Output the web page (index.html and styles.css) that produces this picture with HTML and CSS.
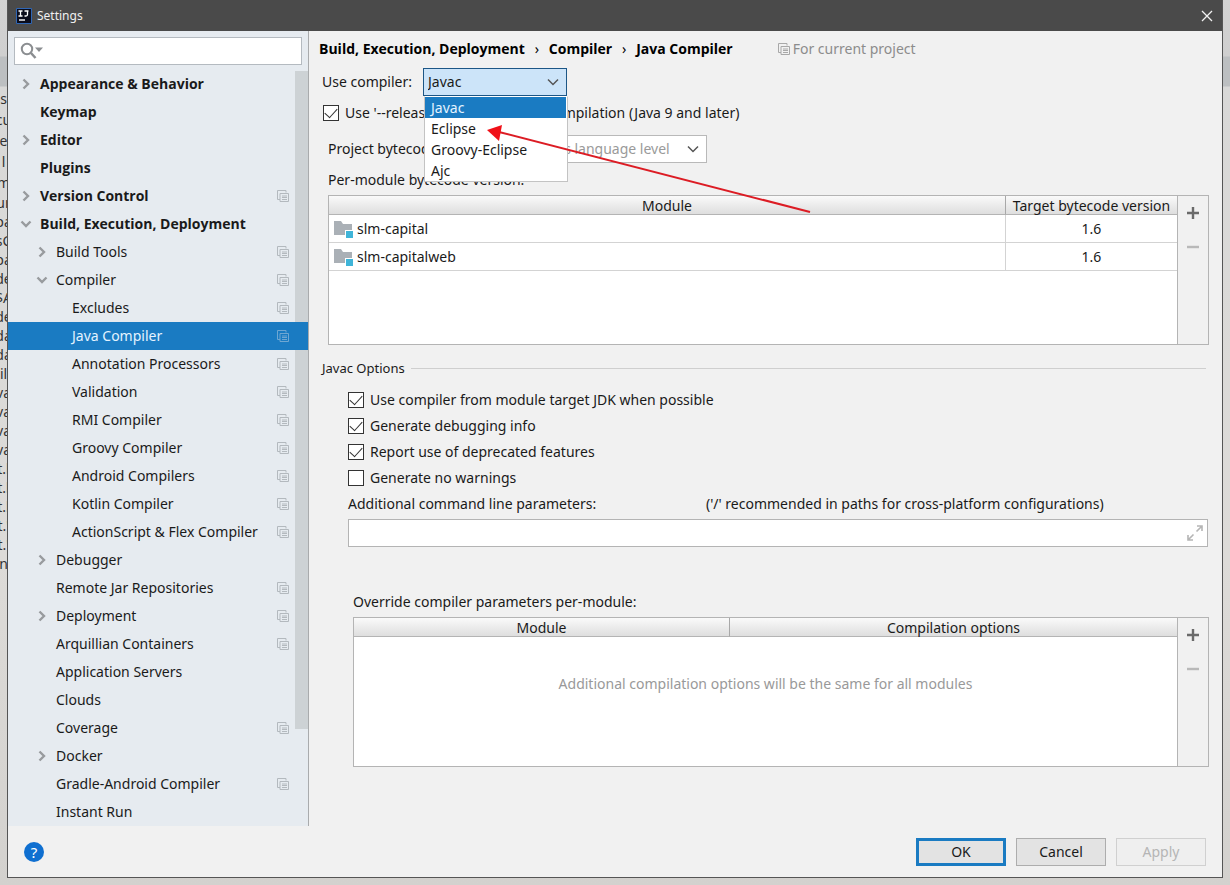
FILE: index.html
```html
<!DOCTYPE html>
<html lang="en">
<head>
<meta charset="utf-8">
<title>Settings</title>
<link rel="stylesheet" href="styles.css">
</head>
<body>
<svg class="symbols" aria-hidden="true">
  <symbol id="right" viewBox="0 0 12 12"><path d="M3.500 1.500 8 6l-4.500 4.500" fill="none" stroke="#989b9e" stroke-width="2.400"/></symbol>
  <symbol id="down" viewBox="0 0 12 12"><path d="M1.500 3.500 6 8l4.500-4.500" fill="none" stroke="#989b9e" stroke-width="2.400"/></symbol>
  <symbol id="copy" viewBox="0 0 12 12"><path d="M9 2.500V.5H.5v9H3M3 3.500h8.500v8H3zM5 6h5M5 7.500h5M5 9.500h5" fill="none" stroke="currentColor"/></symbol>
  <symbol id="chevron" viewBox="0 0 12 8"><path d="M1 1.500 6 6.500l5-5" fill="none" stroke="currentColor" stroke-width="1.500"/></symbol>
  <symbol id="folder" viewBox="0 0 20 18"><path d="M0 1h7l2 3h9v6h-7v5H0z" fill="#aab0b6"/><path d="M12 11h7v7h-7z" fill="#3fb4d8"/></symbol>
  <symbol id="plus" viewBox="0 0 14 14"><path d="M7 1v12M1 7h12" stroke="#6a6a6a" stroke-width="2.400"/></symbol>
  <symbol id="minus" viewBox="0 0 14 14"><path d="M1 7h12" stroke="#b9b9b9" stroke-width="2.400"/></symbol>
</svg>
<div class="desktop">
  <div class="backdrop" aria-hidden="true">
    <div class="code wide"><span>s</span><span>cu</span><span>e</span><span>l</span><span>m</span></div>
    <div class="code"><span>ur</span><span>pa</span><span>sC</span><span>pa</span><span>de</span><span>$A</span><span>de</span><span>da</span><span>da</span><span>il</span><span>va</span><span>va</span><span>va</span><span>va</span><span>t.l</span><span>t.l</span><span>t.l</span><span>t.'</span><span>t.'</span><span>n</span></div>
  </div>
  <div class="dialog" role="dialog" aria-labelledby="dialog-title">
    <header class="titlebar">
      <svg class="logo" viewBox="0 0 16 16"><path d="M.5.5h15v15H.5z" fill="#0b0d1c" stroke="#2f66b5"/><path d="M2.500 3h4M4.500 3v5M2.500 8h4M8.500 3h4M11.500 3v3.500Q11.500 8 10 8H8.500" fill="none" stroke="#fff" stroke-width="1.300"/><path d="M3 12h6" stroke="#fff" stroke-width="1.400"/></svg>
      <h1 id="dialog-title">Settings</h1>
      <button class="close" aria-label="Close"><svg viewBox="0 0 12 12"><path d="m1 1 10 10M11 1 1 11" stroke="#f2f2f2" stroke-width="1.300"/></svg></button>
    </header>
    <div class="body">
      <nav class="sidebar" aria-label="Settings sections">
        <label class="search">
          <svg viewBox="0 0 24 18"><circle cx="7" cy="7" r="5.200" fill="none" stroke="#8b8e91" stroke-width="2"/><path d="m11 11 4.500 5" stroke="#8b8e91" stroke-width="2.500"/><path d="M15 5.500h8l-4 4.500z" fill="#8b8e91"/></svg>
          <input type="text" aria-label="Search settings">
        </label>
        <div class="treebox">
          <ul class="tree">
            <li><a class="l0" href="#"><svg><use href="#right"/></svg><span>Appearance &amp; Behavior</span></a></li>
            <li><a class="l0" href="#"><i></i><span>Keymap</span></a></li>
            <li><a class="l0" href="#"><svg><use href="#right"/></svg><span>Editor</span></a></li>
            <li><a class="l0" href="#"><i></i><span>Plugins</span></a></li>
            <li><a class="l0" href="#"><svg><use href="#right"/></svg><span>Version Control</span><svg class="copy"><use href="#copy"/></svg></a></li>
            <li><a class="l0" href="#"><svg><use href="#down"/></svg><span>Build, Execution, Deployment</span></a></li>
            <li><a class="l1" href="#"><svg><use href="#right"/></svg><span>Build Tools</span><svg class="copy"><use href="#copy"/></svg></a></li>
            <li><a class="l1" href="#"><svg><use href="#down"/></svg><span>Compiler</span><svg class="copy"><use href="#copy"/></svg></a></li>
            <li><a class="l2" href="#"><i></i><span>Excludes</span><svg class="copy"><use href="#copy"/></svg></a></li>
            <li><a class="l2 selected" href="#" aria-current="page"><i></i><span>Java Compiler</span><svg class="copy"><use href="#copy"/></svg></a></li>
            <li><a class="l2" href="#"><i></i><span>Annotation Processors</span><svg class="copy"><use href="#copy"/></svg></a></li>
            <li><a class="l2" href="#"><i></i><span>Validation</span><svg class="copy"><use href="#copy"/></svg></a></li>
            <li><a class="l2" href="#"><i></i><span>RMI Compiler</span><svg class="copy"><use href="#copy"/></svg></a></li>
            <li><a class="l2" href="#"><i></i><span>Groovy Compiler</span><svg class="copy"><use href="#copy"/></svg></a></li>
            <li><a class="l2" href="#"><i></i><span>Android Compilers</span><svg class="copy"><use href="#copy"/></svg></a></li>
            <li><a class="l2" href="#"><i></i><span>Kotlin Compiler</span><svg class="copy"><use href="#copy"/></svg></a></li>
            <li><a class="l2" href="#"><i></i><span>ActionScript &amp; Flex Compiler</span><svg class="copy"><use href="#copy"/></svg></a></li>
            <li><a class="l1" href="#"><svg><use href="#right"/></svg><span>Debugger</span></a></li>
            <li><a class="l1" href="#"><i></i><span>Remote Jar Repositories</span><svg class="copy"><use href="#copy"/></svg></a></li>
            <li><a class="l1" href="#"><svg><use href="#right"/></svg><span>Deployment</span><svg class="copy"><use href="#copy"/></svg></a></li>
            <li><a class="l1" href="#"><i></i><span>Arquillian Containers</span><svg class="copy"><use href="#copy"/></svg></a></li>
            <li><a class="l1" href="#"><i></i><span>Application Servers</span></a></li>
            <li><a class="l1" href="#"><i></i><span>Clouds</span></a></li>
            <li><a class="l1" href="#"><i></i><span>Coverage</span><svg class="copy"><use href="#copy"/></svg></a></li>
            <li><a class="l1" href="#"><svg><use href="#right"/></svg><span>Docker</span></a></li>
            <li><a class="l1" href="#"><i></i><span>Gradle-Android Compiler</span><svg class="copy"><use href="#copy"/></svg></a></li>
            <li><a class="l1" href="#"><i></i><span>Instant Run</span></a></li>
          </ul>
          <div class="scrollbar"></div>
        </div>
      </nav>
      <main class="content">
        <div class="crumbs">
          <b>Build, Execution, Deployment</b><span class="sep">›</span><b>Compiler</b><span class="sep">›</span><b>Java Compiler</b>
          <span class="scope"><svg><use href="#copy"/></svg>For current project</span>
        </div>
        <div class="compiler-row">
          <label for="compiler">Use compiler:</label>
          <div class="combo active">
            <select id="compiler"><option>Javac</option><option>Eclipse</option><option>Groovy-Eclipse</option><option>Ajc</option></select>
            <svg><use href="#chevron"/></svg>
            <ul class="popup" role="listbox" aria-label="Use compiler">
              <li role="option" aria-selected="true">Javac</li>
              <li role="option">Eclipse</li>
              <li role="option">Groovy-Eclipse</li>
              <li role="option">Ajc</li>
            </ul>
            <svg class="arrow" viewBox="0 0 324 90" aria-hidden="true"><path d="M12 7 323 87" stroke="#dc1c24" stroke-width="2"/><path d="M0 5 15 0 12 16z" fill="#f01018"/></svg>
          </div>
        </div>
        <label class="check release"><input type="checkbox" checked><span>Use '--release' option for cross-compilation (Java 9 and later)</span></label>
        <div class="bytecode-row">
          <label for="bytecode">Project bytecode version:</label>
          <div class="combo">
            <select id="bytecode" class="muted"><option>Same as language level</option></select>
            <svg><use href="#chevron"/></svg>
          </div>
        </div>
        <p class="module-label">Per-module bytecode version:</p>
        <section class="panel modules">
          <div class="tablebox">
            <table>
              <colgroup><col><col class="target"></colgroup>
              <thead><tr><th>Module</th><th>Target bytecode version</th></tr></thead>
              <tbody>
                <tr><td><div class="module"><svg><use href="#folder"/></svg>slm-capital</div></td><td class="version">1.6</td></tr>
                <tr><td><div class="module"><svg><use href="#folder"/></svg>slm-capitalweb</div></td><td class="version">1.6</td></tr>
              </tbody>
            </table>
          </div>
          <div class="tools"><button aria-label="Add"><svg><use href="#plus"/></svg></button><button aria-label="Remove" disabled><svg><use href="#minus"/></svg></button></div>
        </section>
        <h2 class="group">Javac Options</h2>
        <div class="options">
          <label class="check"><input type="checkbox" checked><span>Use compiler from module target JDK when possible</span></label>
          <label class="check"><input type="checkbox" checked><span>Generate debugging info</span></label>
          <label class="check"><input type="checkbox" checked><span>Report use of deprecated features</span></label>
          <label class="check"><input type="checkbox"><span>Generate no warnings</span></label>
          <div class="params-label"><label for="params">Additional command line parameters:</label><span>('/' recommended in paths for cross-platform configurations)</span></div>
          <div class="params"><input id="params" type="text"><button aria-label="Expand"><svg viewBox="0 0 16 16"><path d="M10 1h5v5M15 1 9.500 6.500M1 10v5h5M1 15l5.500-5.500" fill="none" stroke="#b5b5b5" stroke-width="1.600"/></svg></button></div>
        </div>
        <p class="override-label">Override compiler parameters per-module:</p>
        <section class="panel overrides">
          <div class="tablebox">
            <table>
              <colgroup><col class="name"><col></colgroup>
              <thead><tr><th>Module</th><th>Compilation options</th></tr></thead>
            </table>
            <p class="empty">Additional compilation options will be the same for all modules</p>
          </div>
          <div class="tools"><button aria-label="Add"><svg><use href="#plus"/></svg></button><button aria-label="Remove" disabled><svg><use href="#minus"/></svg></button></div>
        </section>
      </main>
    </div>
    <footer class="footer">
      <button class="help" aria-label="Help">?</button>
      <button class="btn primary">OK</button>
      <button class="btn">Cancel</button>
      <button class="btn" disabled>Apply</button>
    </footer>
  </div>
</div>
</body>
</html>
```
FILE: styles.css
```css
* { box-sizing: border-box; }
body {
  margin: 0;
  font: 14px/20px "Noto Sans", "Open Sans", sans-serif;
  color: #1a1a1a;
}
ul, p, h1, h2 { margin: 0; padding: 0; list-style: none; font-size: inherit; font-weight: normal; }
button, input, select { font: inherit; color: inherit; margin: 0; padding: 0; border: 0; background: none; border-radius: 0; }
svg { flex: none; display: block; }
.symbols { position: absolute; width: 0; height: 0; }

.desktop {
  display: flex;
  min-height: 100vh;
  padding: 0 7px 7px 0;
  overflow: hidden;
  background: linear-gradient(#d2d2d2 0, #cfcfcf 56px, #bcbfc1 57px, #bcbfc1 86px, #d8d8d7 87px, #dddbd8 560px, #d3d1ce 100%);
}
.backdrop { width: 7px; flex: none; padding-top: 88px; overflow: hidden; color: #333; }
.code { display: flex; flex-direction: column; align-items: center; line-height: 19px; }
.code.wide { line-height: 21px; }

.dialog {
  flex: 1;
  min-width: 0;
  display: flex;
  flex-direction: column;
  background: #f1f1f1;
  border: 1px solid #555;
  border-top: 0;
}
.titlebar { display: flex; align-items: center; gap: 5px; height: 31px; padding: 0 9px 0 8px; background: #4a4a4a; color: #f0f0f0; }
.titlebar h1 { flex: 1; font: 12px/20px "Noto Sans", sans-serif; }
.logo { width: 16px; height: 16px; }
.close svg { width: 12px; height: 12px; }

.body { flex: 1; display: flex; }
.sidebar { flex: none; width: 301px; background: #e6ebf0; border-right: 1px solid #a9abad; display: flex; flex-direction: column; }
.search { display: flex; align-items: center; height: 28px; margin: 6px 6px 5px; padding-left: 5px; background: #fff; border: 1px solid #b4bac0; }
.search svg { width: 24px; height: 18px; }
.search input { flex: 1; min-width: 0; outline: 0; }
.treebox { flex: 1; display: flex; position: relative; }
.tree { flex: 1; }
.tree a { display: flex; align-items: center; gap: 8px; height: 28px; padding-right: 19px; color: inherit; text-decoration: none; white-space: nowrap; }
.tree a > svg, .tree i { width: 12px; height: 12px; }
.tree i { flex: none; }
.tree span { flex: 1; }
.tree .copy { color: #b3b9be; }
.tree .l0 { padding-left: 12px; }
.l0, .crumbs b { font-family: "Open Sans", sans-serif; font-weight: bold; }
.l1 { padding-left: 28px; }
.l2 { padding-left: 44px; }
.tree .selected { position: relative; z-index: 1; background: #1a7bc2; color: #e4f3ff; }
.tree .selected .copy { color: #6fa7d2; }
.scrollbar { position: absolute; top: 1px; right: 0; width: 13px; height: 87%; background: #cdd2d5; }

.content { flex: 1; min-width: 0; padding: 8px 13px 0 10px; display: flex; flex-direction: column; }
.crumbs { display: flex; align-items: center; color: #000; }
.sep { width: 24px; text-align: center; }
.scope { display: flex; align-items: center; gap: 3px; margin-left: 45px; color: #8c8c8c; }
.scope svg { width: 12px; height: 12px; color: #a8a8a8; }

.compiler-row { display: flex; align-items: center; gap: 11px; margin: 9px 0 6px 3px; }
.combo { position: relative; display: grid; align-items: center; height: 28px; color: #555; background: #fff; border: 1px solid #b9b9b9; }
.combo select { grid-area: 1 / 1; height: 26px; padding: 0 36px 0 4px; appearance: none; color: #1a1a1a; outline: 0; }
.combo select.muted { color: #9a9a9a; }
.combo > svg { grid-area: 1 / 1; justify-self: end; width: 12px; height: 8px; margin-right: 7px; pointer-events: none; }
.combo.active { width: 144px; background: #cce4f9; border-color: #1c5686; }
.popup { position: absolute; z-index: 2; top: 27px; left: 0; width: 144px; background: #fff; border: 1px solid #c3c3c3; border-top-color: #fff; color: #1a1a1a; }
.popup li { height: 21px; line-height: 21px; padding-left: 6px; margin-right: 1px; }
.popup [aria-selected] { background: #1a7bc2; color: #e4f3ff; }
.combo > .arrow { position: absolute; z-index: 3; left: 63px; top: 56px; width: 324px; height: 90px; margin: 0; }

.check { display: flex; align-items: center; gap: 6px; height: 26px; }
.check input { appearance: none; width: 16px; height: 16px; display: grid; place-items: center; background: #fff; border: 1px solid #333; }
.check input:checked::before { content: ""; width: 11px; height: 6px; border: solid #333; border-width: 0 0 1px 1px; transform: translateY(-2px) rotate(-48deg); }
.release { margin: -2px 0 0 4px; }
.bytecode-row { display: flex; align-items: center; gap: 18px; margin: 9px 0 0 9px; }
.module-label { margin: 7px 0 5px 9px; }

.panel { display: flex; height: 150px; border: 1px solid #b4b4b4; }
.modules { margin-left: 9px; }
.tablebox { flex: 1; min-width: 0; background: #fff; border-right: 1px solid #b4b4b4; }
table { width: 100%; table-layout: fixed; border-collapse: separate; border-spacing: 0; }
.target { width: 172px; }
.name { width: 375px; }
th { height: 19px; padding: 2px 0 0; line-height: 16px; font-weight: normal; background: linear-gradient(#fafafa, #dedede); border-bottom: 1px solid #b4b4b4; white-space: nowrap; }
th + th { border-left: 1px solid #a8a8a8; }
td { height: 28px; padding: 0 5px; border-bottom: 1px solid #d3d3d3; }
td + td { border-left: 1px solid #d3d3d3; }
.module { display: flex; align-items: center; gap: 3px; }
.module svg { width: 20px; height: 18px; }
.version { text-align: center; }
.tools { width: 30px; display: flex; flex-direction: column; align-items: center; gap: 20px; padding-top: 10px; }
.tools svg { width: 14px; height: 14px; }

.group { display: flex; align-items: center; gap: 6px; margin: 13px 3px 9px; font-size: 13px; }
.group::after { content: ""; flex: 1; height: 1px; background: #cfcfcf; }
.options { margin: 0 1px 0 29px; }
.params-label { display: grid; grid-template-columns: 358px 1fr; margin: 3px 0 5px; }
.params { display: flex; height: 28px; padding-right: 4px; background: #fff; border: 1px solid #b4b4b4; }
.params input { flex: 1; padding: 0 5px; outline: 0; }
.params svg { width: 16px; height: 16px; }
.override-label { margin: 45px 0 5px 34px; }
.overrides { margin-left: 34px; }
.empty { padding-top: 37px; text-align: center; color: #999; }

.footer { display: flex; align-items: center; gap: 10px; height: 51px; padding: 0 16px; }
.help { width: 20px; height: 20px; margin-right: auto; border-radius: 50%; background: #0f6fd0; color: #fff; font-size: 15px; line-height: 20px; text-align: center; }
.btn { width: 90px; height: 28px; background: #e3e3e3; border: 1px solid #adadad; }
.btn.primary { border: 3px solid #1a7bc2; }
.btn:disabled { background: #efefef; border-color: #d0d0d0; color: #b5b5b5; }
```
